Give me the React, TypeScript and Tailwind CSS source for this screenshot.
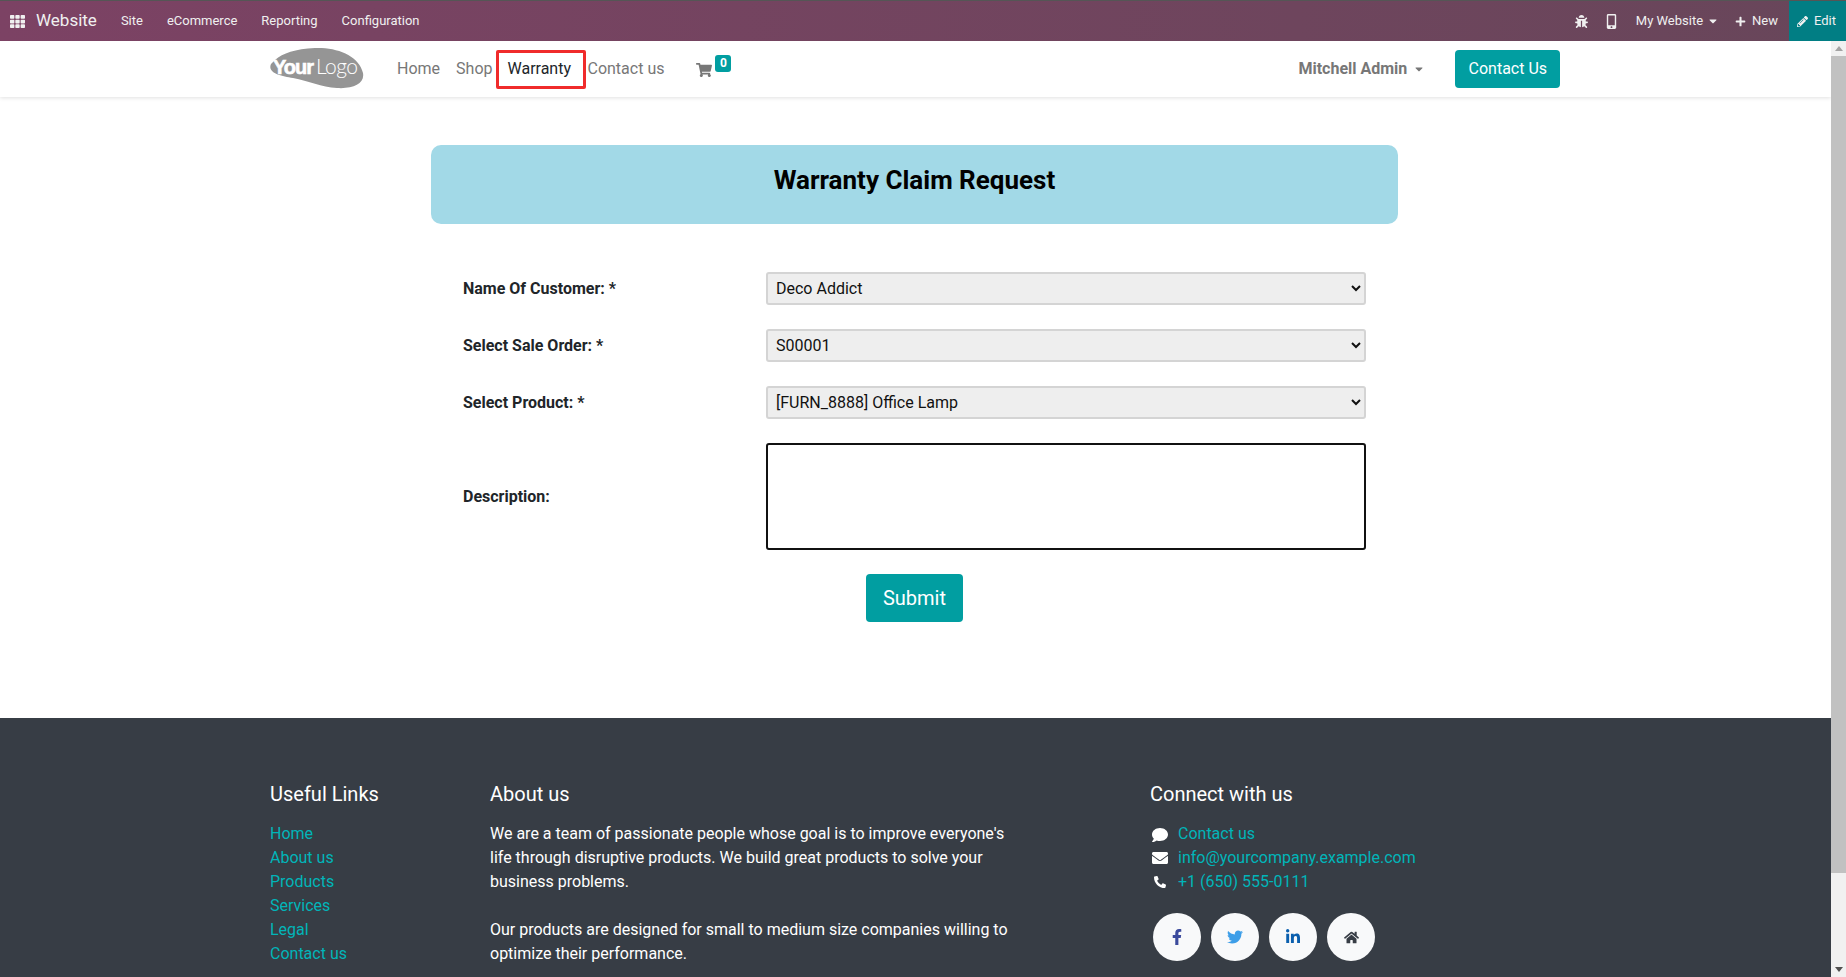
import React from 'react';
import {
  FaTh,
  FaBug,
  FaMobileAlt,
  FaCaretDown,
  FaPlus,
  FaPencilAlt,
  FaShoppingCart,
  FaComment,
  FaEnvelope,
  FaPhoneAlt,
  FaFacebookF,
  FaTwitter,
  FaLinkedinIn,
  FaHome,
} from 'react-icons/fa';

function Logo() {
  return (
    <svg width="96" height="42" viewBox="0 0 96 42" className="shrink-0">
      <path
        d="M2 16 L6 12 C14 5 26 1 46 0 C68 -1 90 8 94 25 C96 36 84 41 68 40 C52 39 40 33 24 30 C12 28 -2 25 2 16 Z"
        fill="#959595"
      />
      <text x="4" y="26" fontFamily="Liberation Sans, sans-serif" fontWeight="700" fontSize="20" letterSpacing="-1" stroke="#fff" strokeWidth="0.6" fill="#fff">
        Your
      </text>
      <text x="47" y="26" fontFamily="Lato, sans-serif" fontWeight="300" fontSize="21" letterSpacing="-0.5" fill="#fff">
        Logo
      </text>
    </svg>
  );
}

function TopBar() {
  return (
    <div className="flex h-[41px] shrink-0 items-center border-t border-[#555] bg-gradient-to-r from-[#7c4264] to-[#68465a] text-[13px] text-[#f0f0f0]">
      <FaTh className="ml-[10px] size-[15px]" />
      <span className="ml-[11px] text-[17px]">Website</span>
      <span className="ml-[24px]">Site</span>
      <span className="ml-[24px]">eCommerce</span>
      <span className="ml-[24px]">Reporting</span>
      <span className="ml-[24px]">Configuration</span>
      <div className="ml-auto flex h-full items-center">
        <FaBug className="size-[13px]" />
        <FaMobileAlt className="ml-[16px] size-[15px]" />
        <span className="ml-[17px]">My Website</span>
        <FaCaretDown className="ml-[4px] size-[12px]" />
        <FaPlus className="ml-[16px] size-[11px]" />
        <span className="ml-[6px]">New</span>
        <div className="ml-[11px] flex h-full w-[57px] items-center bg-[#017e84] pl-[8px]">
          <FaPencilAlt className="size-[11px]" />
          <span className="ml-[6px]">Edit</span>
        </div>
      </div>
    </div>
  );
}

function NavBar() {
  return (
    <div className="flex h-[56px] shrink-0 items-center pl-[269px] text-[16px] text-[#777] shadow-[0_1px_4px_rgba(0,0,0,0.12)]">
      <Logo />
      <span className="ml-[32px]">Home</span>
      <span className="ml-[16px]">Shop</span>
      <div className="ml-[4px] mt-[1px] flex h-[39px] w-[90px] items-start justify-start rounded-[2px] border-[3px] border-[#f02b2b] pl-[8px] pt-[4px] text-[#212529]">
        Warranty
      </div>
      <span className="ml-[1px]">Contact us</span>
      <div className="relative ml-[32px] mt-[1px]">
        <FaShoppingCart className="size-[16px]" />
        <span className="absolute left-[19px] top-[-7px] flex h-[17px] w-[16px] items-center justify-center rounded-[3px] bg-[#019ea1] text-[12px] font-bold leading-none text-white">
          0
        </span>
      </div>
      <span className="ml-[586px] font-bold">Mitchell Admin</span>
      <FaCaretDown className="ml-[6px] size-[12px]" />
      <button className="ml-[30px] h-[38px] w-[105px] rounded-[4px] bg-[#019ea1] text-white">Contact Us</button>
    </div>
  );
}

function FieldRow({ label, value }: { label: string; value: string }) {
  return (
    <div className="flex h-[33px] items-center">
      <label className="w-[303px] font-bold text-[#212529]">{label}</label>
      <select
        defaultValue={value}
        className="h-[33px] w-[600px] rounded-[3px] border-2 border-[#d4d4d4] bg-[#eeeeee] pl-[4px] text-[#111]"
      >
        <option>{value}</option>
      </select>
    </div>
  );
}

function WarrantyForm() {
  return (
    <div className="ml-[431px] flex h-[621px] w-[967px] flex-col pt-[48px]">
      <div className="h-[79px] rounded-[10px] bg-[#a2d9e7] pt-[19px] text-center text-[26px] font-bold leading-[32px] text-black">
        Warranty Claim Request
      </div>
      <div className="mt-[48px] flex flex-col gap-[24px] pl-[32px]">
        <FieldRow label="Name Of Customer: *" value="Deco Addict" />
        <FieldRow label="Select Sale Order: *" value="S00001" />
        <FieldRow label="Select Product: *" value="[FURN_8888] Office Lamp" />
        <div className="flex h-[107px] items-center">
          <label className="w-[303px] font-bold text-[#212529]">Description:</label>
          <textarea className="h-[107px] w-[600px] resize-none rounded-[3px] border-2 border-[#111] bg-white" />
        </div>
      </div>
      <button className="mx-auto mt-[24px] h-[48px] w-[97px] rounded-[4px] bg-[#019ea1] text-[20px] text-white">
        Submit
      </button>
    </div>
  );
}

function Footer() {
  const links = ['Home', 'About us', 'Products', 'Services', 'Legal', 'Contact us'];
  return (
    <div className="flex-1 bg-[#373d45] pl-[270px] pt-[64px] text-white">
      <div className="flex">
        <div className="w-[220px]">
          <h5 className="text-[20px] leading-[24px]">Useful Links</h5>
          <ul className="mt-[16px] text-[#01b5b9]">
            {links.map((l) => (
              <li key={l} className="leading-[24px]">
                {l}
              </li>
            ))}
          </ul>
        </div>
        <div className="w-[660px]">
          <h5 className="text-[20px] leading-[24px]">About us</h5>
          <p className="mt-[16px] w-[520px] leading-[24px]">
            We are a team of passionate people whose goal is to improve everyone's life through disruptive products. We
            build great products to solve your business problems.
          </p>
          <p className="mt-[24px] w-[520px] leading-[24px]">
            Our products are designed for small to medium size companies willing to optimize their performance.
          </p>
        </div>
        <div>
          <h5 className="text-[20px] leading-[24px]">Connect with us</h5>
          <ul className="mt-[16px] text-[#01b5b9]">
            <li className="flex h-[24px] items-center">
              <FaComment className="ml-[2px] mt-[2px] size-[16px] text-white" />
              <span className="ml-[10px]">Contact us</span>
            </li>
            <li className="flex h-[24px] items-center">
              <FaEnvelope className="ml-[2px] size-[16px] text-white" />
              <span className="ml-[10px]">info@yourcompany.example.com</span>
            </li>
            <li className="flex h-[24px] items-center">
              <FaPhoneAlt className="ml-[4px] mr-[2px] size-[12px] text-white" />
              <span className="ml-[10px]">+1 (650) 555-0111</span>
            </li>
          </ul>
          <div className="ml-[3px] mt-[19px] flex gap-[10px]">
            <div className="flex h-[48px] w-[48px] items-center justify-center rounded-full bg-[#f8f9fa] text-[#3b4a9c]">
              <FaFacebookF className="size-[16px]" />
            </div>
            <div className="flex h-[48px] w-[48px] items-center justify-center rounded-full bg-[#f8f9fa] text-[#3d9ee8]">
              <FaTwitter className="size-[16px]" />
            </div>
            <div className="flex h-[48px] w-[48px] items-center justify-center rounded-full bg-[#f8f9fa] text-[#0a5fae]">
              <FaLinkedinIn className="size-[16px]" />
            </div>
            <div className="flex h-[48px] w-[48px] items-center justify-center rounded-full bg-[#f8f9fa] text-[#373d45]">
              <FaHome className="size-[15px]" />
            </div>
          </div>
        </div>
      </div>
    </div>
  );
}

function ScrollBar() {
  return (
    <div className="flex w-[15px] shrink-0 flex-col bg-[#f1f1f1]">
      <div className="flex h-[15px] items-center justify-center">
        <div className="h-0 w-0 border-x-[4px] border-b-[5px] border-x-transparent border-b-[#a3a3a3]" />
      </div>
      <div className="h-[817px] bg-[#c1c1c1]" />
      <div className="mt-auto flex h-[15px] items-center justify-center">
        <div className="h-0 w-0 border-x-[4px] border-t-[5px] border-x-transparent border-t-[#505050]" />
      </div>
    </div>
  );
}

export default function App() {
  return (
    <div className="flex h-[977px] flex-col overflow-hidden bg-white font-['Roboto',sans-serif] text-[16px]">
      <TopBar />
      <div className="flex min-h-0 flex-1">
        <div className="flex min-w-0 flex-1 flex-col overflow-hidden">
          <NavBar />
          <WarrantyForm />
          <Footer />
        </div>
        <ScrollBar />
      </div>
    </div>
  );
}
